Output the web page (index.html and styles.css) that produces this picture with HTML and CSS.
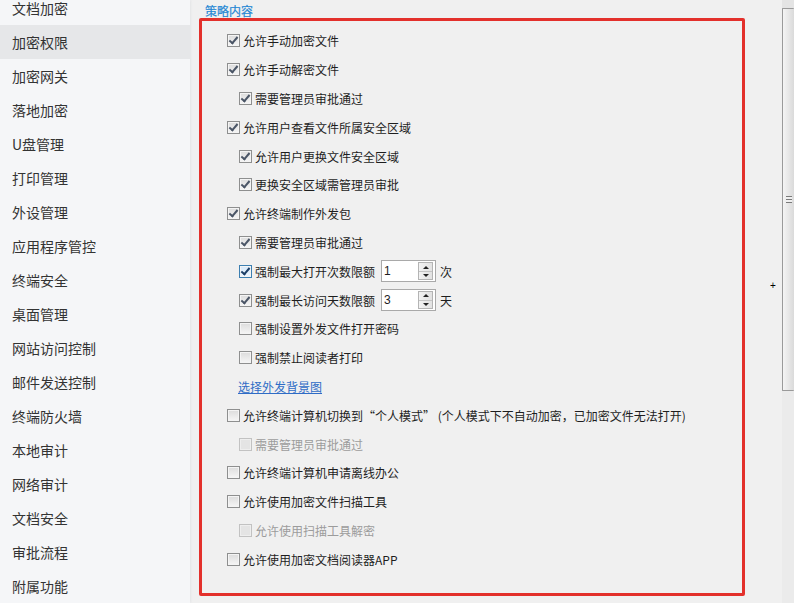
FILE: index.html
```html
<!DOCTYPE html>
<html lang="zh-CN">
<head>
    <meta charset="UTF-8">
    <title>加密权限</title>
    <link rel="stylesheet" href="styles.css">
</head>
<body>
<div class="app">
    <aside class="sidebar">
        <div class="menu">
            <div class="menu-item">文档加密</div>
            <div class="menu-item active">加密权限</div>
            <div class="menu-item">加密网关</div>
            <div class="menu-item">落地加密</div>
            <div class="menu-item">U盘管理</div>
            <div class="menu-item">打印管理</div>
            <div class="menu-item">外设管理</div>
            <div class="menu-item">应用程序管控</div>
            <div class="menu-item">终端安全</div>
            <div class="menu-item">桌面管理</div>
            <div class="menu-item">网站访问控制</div>
            <div class="menu-item">邮件发送控制</div>
            <div class="menu-item">终端防火墙</div>
            <div class="menu-item">本地审计</div>
            <div class="menu-item">网络审计</div>
            <div class="menu-item">文档安全</div>
            <div class="menu-item">审批流程</div>
            <div class="menu-item">附属功能</div>
        </div>
    </aside>

    <main class="main">
        <div class="section-title">策略内容</div>
        <div class="policy-box">
            <div class="row"><span class="cb on"></span>允许手动加密文件</div>
            <div class="row"><span class="cb on"></span>允许手动解密文件</div>
            <div class="row sub"><span class="cb on"></span>需要管理员审批通过</div>
            <div class="row"><span class="cb on"></span>允许用户查看文件所属安全区域</div>
            <div class="row sub"><span class="cb on"></span>允许用户更换文件安全区域</div>
            <div class="row sub"><span class="cb on"></span>更换安全区域需管理员审批</div>
            <div class="row"><span class="cb on"></span>允许终端制作外发包</div>
            <div class="row sub"><span class="cb on"></span>需要管理员审批通过</div>
            <div class="row sub">
                <span class="cb on focus"></span>强制最大打开次数限额
                <span class="spin"><span class="spin-val">1</span><span class="spin-btn"><i class="up"></i><i class="down"></i></span></span>
                <span class="unit">次</span>
            </div>
            <div class="row sub">
                <span class="cb on"></span>强制最长访问天数限额
                <span class="spin"><span class="spin-val">3</span><span class="spin-btn"><i class="up"></i><i class="down"></i></span></span>
                <span class="unit">天</span>
            </div>
            <div class="row sub"><span class="cb"></span>强制设置外发文件打开密码</div>
            <div class="row sub"><span class="cb"></span>强制禁止阅读者打印</div>
            <div class="row link-row"><a class="link" href="#">选择外发背景图</a></div>
            <div class="row"><span class="cb"></span>允许终端计算机切换到“个人模式” (个人模式下不自动加密，已加密文件无法打开)</div>
            <div class="row sub disabled"><span class="cb"></span>需要管理员审批通过</div>
            <div class="row"><span class="cb"></span>允许终端计算机申请离线办公</div>
            <div class="row"><span class="cb"></span>允许使用加密文件扫描工具</div>
            <div class="row sub disabled"><span class="cb"></span>允许使用扫描工具解密</div>
            <div class="row"><span class="cb"></span>允许使用加密文档阅读器APP</div>
        </div>
        <span class="cursor-mark">+</span>
    </main>

    <div class="scrollbar">
        <div class="scroll-arrow"></div>
        <div class="scroll-thumb"><span class="grip"></span></div>
    </div>
</div>
</body>
</html>
```

FILE: styles.css
```css
body {
    margin: 0;
    padding: 0;
    font-family: "Noto Sans CJK SC", "Liberation Sans", sans-serif;
    color: #1e1e1e;
    overflow: hidden;
}
.app {
    display: flex;
    height: 603px;
    width: 794px;
    background-color: #f0f0f0;
}

/* left menu */
.sidebar {
    width: 190px;
    flex-shrink: 0;
    background-color: #f5f6f8;
    box-shadow: 1px 0 2px #e4e5e7;
    overflow: hidden;
}
.menu {
    margin-top: -9px;
}
.menu-item {
    height: 34px;
    line-height: 34px;
    padding-left: 12px;
    font-size: 14px;
    color: #333;
}
.menu-item.active {
    background-color: #e6e7e9;
}

/* content */
.main {
    position: relative;
    flex: 1;
    padding-left: 9px;
    padding-top: 3px;
}
.section-title {
    font-size: 12px;
    line-height: 16px;
    color: #2487d4;
    padding-left: 6px;
    -webkit-text-stroke: 0.2px #2487d4;
}
.policy-box {
    box-sizing: border-box;
    width: 546px;
    height: 578px;
    border: 3px solid #e3302b;
    border-radius: 2px;
    padding-top: 5.5px;
    padding-left: 25px;
    margin-top: -1px;
}
.row {
    display: flex;
    align-items: center;
    height: 28.8px;
    font-size: 12px;
    white-space: nowrap;
}
.row.sub {
    padding-left: 12px;
}
.row.link-row {
    padding-left: 11px;
}
.row.disabled {
    color: #9c9c9c;
}

/* checkbox */
.cb {
    position: relative;
    width: 11px;
    height: 11px;
    border: 1px solid #8e8f8f;
    background: linear-gradient(#dcdcdc, #f6f6f6);
    box-shadow: inset 0 0 0 1px #f4f4f4;
    margin-right: 3px;
    flex-shrink: 0;
}
.cb.on::after {
    content: "";
    position: absolute;
    left: 3px;
    top: 0px;
    width: 3px;
    height: 7px;
    border-right: 2px solid #4a5566;
    border-bottom: 2px solid #4a5566;
    transform: rotate(40deg);
}
.cb.focus {
    border-color: #3c7fb1;
    background: linear-gradient(#d6e9fb, #eef6fe);
}
.cb.focus::after {
    border-color: #1d3f66;
}
.disabled .cb {
    border-color: #c2c2c2;
    background: #e4e4e4;
    box-shadow: inset 0 0 0 1px #eeeeee;
}

/* spin box */
.spin {
    display: flex;
    width: 53px;
    height: 20px;
    margin-left: 6px;
    border: 1px solid #a9a9a9;
    background-color: #fff;
}
.spin-val {
    flex: 1;
    padding-left: 2px;
    line-height: 20px;
    font-family: "Liberation Sans", sans-serif;
    font-size: 12px;
}
.spin-btn {
    display: flex;
    flex-direction: column;
    width: 13px;
    margin: 1px 2px 1px 0;
    border: 1px solid #b4b4b4;
    background: linear-gradient(90deg, #f2f2f2, #e2e2e2);
}
.spin-btn i {
    flex: 1;
    display: flex;
    align-items: center;
    justify-content: center;
}
.spin-btn i.up {
    border-bottom: 1px solid #c4c4c4;
}
.spin-btn i.up::after {
    content: "";
    border-left: 3px solid transparent;
    border-right: 3px solid transparent;
    border-bottom: 3px solid #222;
}
.spin-btn i.down::after {
    content: "";
    border-left: 3px solid transparent;
    border-right: 3px solid transparent;
    border-top: 3px solid #222;
}
.unit {
    margin-left: 4px;
}

.link {
    color: #2f6cc6;
    font-size: 12px;
    text-decoration: underline;
}

.cursor-mark {
    position: absolute;
    left: 580px;
    top: 280px;
    font-size: 10px;
    font-family: "Liberation Sans", sans-serif;
    color: #000;
}

/* scrollbar */
.scrollbar {
    width: 12px;
    flex-shrink: 0;
    background-color: #ebebeb;
    display: flex;
    flex-direction: column;
}
.scroll-arrow {
    height: 8px;
    background-color: #e4e4e4;
}
.scroll-thumb {
    height: 381px;
    border: 1px solid #9a9a9a;
    border-right: none;
    border-radius: 1px;
    background: linear-gradient(90deg, #f4f4f4, #dadada);
    display: flex;
    align-items: center;
    justify-content: center;
}
.grip {
    width: 6px;
    height: 5px;
    border-top: 1px solid #7a7a7a;
    border-bottom: 1px solid #7a7a7a;
    background: linear-gradient(#f0f0f0 40%, #7a7a7a 40%, #7a7a7a 60%, #f0f0f0 60%);
}
```
